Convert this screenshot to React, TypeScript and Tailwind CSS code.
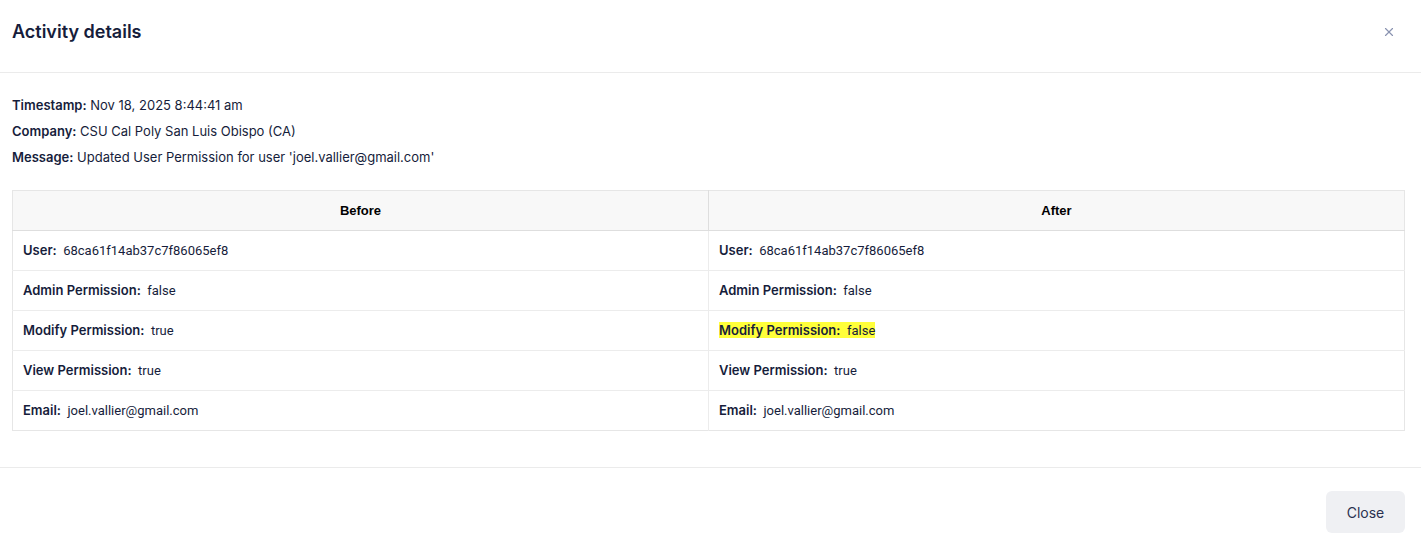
import { X } from 'lucide-react'

type Row = { label: string; before: string; after: string }

const rows: Row[] = [
  { label: 'User', before: '68ca61f14ab37c7f86065ef8', after: '68ca61f14ab37c7f86065ef8' },
  { label: 'Admin Permission', before: 'false', after: 'false' },
  { label: 'Modify Permission', before: 'true', after: 'false' },
  { label: 'View Permission', before: 'true', after: 'true' },
  { label: 'Email', before: 'joel.vallier@gmail.com', after: 'joel.vallier@gmail.com' },
]

function Cell({ label, value, changed }: { label: string; value: string; changed?: boolean }) {
  return (
    <td className="h-10 border-t border-[#ececec] px-[10px] align-middle text-[13px] text-[#161d3b] first:border-r first:border-r-[#ececec]">
      <span className={changed ? 'bg-[#ffff3b]' : ''}>
        <span className="font-['Inter',sans-serif] font-semibold">{label}:</span>
        <span className="font-['Roboto',sans-serif]">&nbsp; {value}</span>
      </span>
    </td>
  )
}

export default function App() {
  return (
    <div className="h-[550px] w-full bg-white font-['Inter',sans-serif] text-[#161d3b]">
      <div className="flex h-[73px] items-start justify-between border-b border-[#ebebeb] pt-[20px] pl-3 pr-[25px]">
        <h2 className="text-[18px] leading-6 font-semibold text-[#161d3b]">Activity details</h2>
        <button type="button" className="mt-[5px] text-[#8a93b0]">
          <X size={14} strokeWidth={2} />
        </button>
      </div>
      <div className="pl-3 pr-4 pt-[23px] pb-9">
        <div className="flex flex-col gap-[8px] text-[13px] leading-[18px]">
          <p>
            <span className="font-semibold">Timestamp:</span> Nov 18, 2025 8:44:41 am
          </p>
          <p>
            <span className="font-semibold">Company:</span> CSU Cal Poly San Luis Obispo (CA)
          </p>
          <p>
            <span className="font-semibold">Message:</span> Updated User Permission for user 'joel.vallier@gmail.com'
          </p>
        </div>
        <table className="mt-[24px] w-full table-fixed border-collapse border border-[#e6e6e6]">
          <thead>
            <tr className="bg-[#f8f8f8]">
              <th className="h-10 border-r border-b border-[#dedede] font-['Liberation_Sans',sans-serif] text-[13px] font-bold text-black">
                Before
              </th>
              <th className="h-10 border-b border-[#dedede] font-['Liberation_Sans',sans-serif] text-[13px] font-bold text-black">
                After
              </th>
            </tr>
          </thead>
          <tbody>
            {rows.map((r) => (
              <tr key={r.label}>
                <Cell label={r.label} value={r.before} />
                <Cell label={r.label} value={r.after} changed={r.before !== r.after} />
              </tr>
            ))}
          </tbody>
        </table>
      </div>
      <div className="flex justify-end border-t border-[#ebebeb] px-4 pt-[23px]">
        <button
          type="button"
          className="h-[42px] w-[79px] rounded-md bg-[#eff0f3] text-[14px] text-[#2a3150]"
        >
          Close
        </button>
      </div>
    </div>
  )
}
